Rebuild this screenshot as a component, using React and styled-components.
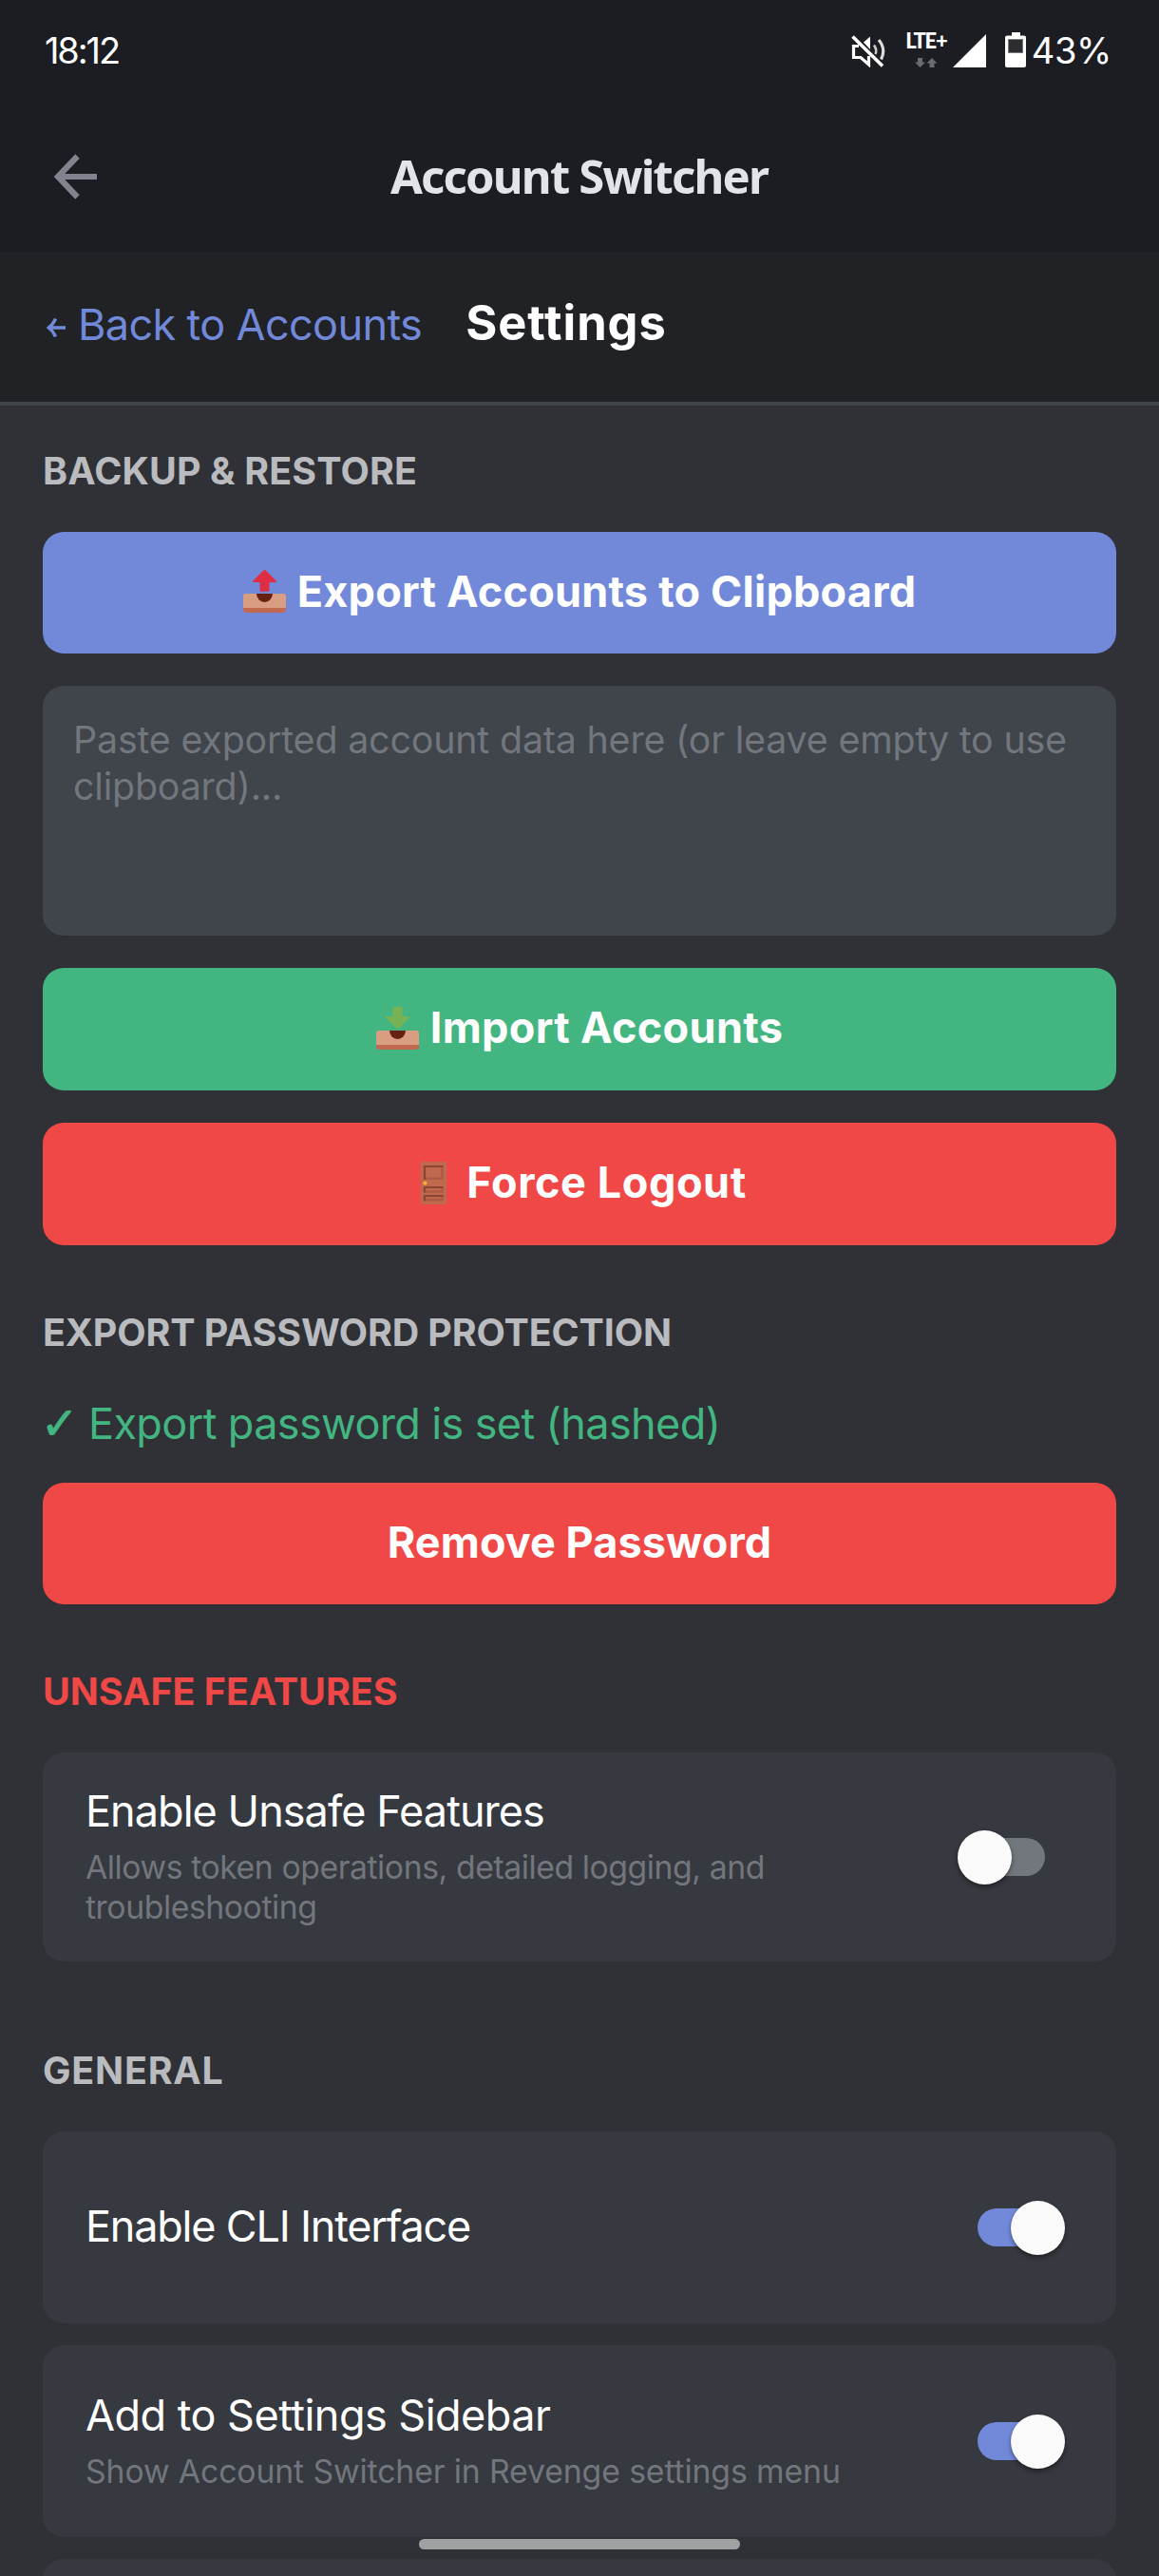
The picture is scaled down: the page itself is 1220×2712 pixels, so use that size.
import React from "react";
import styled, { createGlobalStyle } from "styled-components";

const colors = {
  header: "#1c1d22",
  bar: "#202225",
  page: "#2f3136",
  card: "#36393f",
  input: "#40444b",
  muted: "#72767d",
  label: "#b9bbbe",
  blurple: "#7289da",
  green: "#43b581",
  red: "#f04747",
};

const GlobalStyle = createGlobalStyle`
  * { box-sizing: border-box; }
  body {
    margin: 0;
    background: ${colors.page};
    font-family: Inter, "Open Sans", sans-serif;
    -webkit-font-smoothing: antialiased;
  }
`;

const Screen = styled.div`
  width: 1220px;
  height: 2712px;
  overflow: hidden;
  display: flex;
  flex-direction: column;
  background: ${colors.page};
`;

const StatusBar = styled.div`
  flex: none;
  height: 106px;
  padding: 30px 50px 0 47px;
  display: flex;
  justify-content: space-between;
  background: ${colors.header};
  color: #fff;
`;

const StatusText = styled.span`
  font-size: 38px;
  line-height: 46px;
  letter-spacing: ${(p) => p.$spacing}px;
`;

const StatusIcons = styled.div`
  display: flex;
  align-items: flex-start;
`;

const StatusIcon = styled.svg`
  display: block;
  flex: none;
  margin: ${(p) => p.$margin};
`;

const Network = styled.div`
  width: 42px;
  margin: 2px 7px 0 22px;
  display: flex;
  flex-direction: column;
  align-items: center;
`;

const NetworkLabel = styled.span`
  font-family: Lato, sans-serif;
  font-size: 22px;
  line-height: 22px;
  font-weight: 900;
  letter-spacing: -1.2px;
  white-space: nowrap;
`;

const AppBar = styled.header`
  flex: none;
  height: 159px;
  padding: 0 57px 0 56px;
  display: grid;
  grid-template-columns: 48px 1fr 48px;
  align-items: center;
  background: ${colors.header};
`;

const AppTitle = styled.h1`
  margin: 0 0 1px;
  text-align: center;
  font-family: "Noto Sans", sans-serif;
  font-size: 49px;
  line-height: 60px;
  font-weight: 700;
  letter-spacing: -1.8px;
  color: #e3e4e8;
`;

const SubBar = styled.nav`
  flex: none;
  height: 162px;
  padding: 45px 45px 0 49px;
  display: flex;
  align-items: flex-start;
  background: ${colors.bar};
  border-bottom: 4px solid ${colors.input};
`;

const BackLink = styled.a`
  margin-top: 4px;
  display: flex;
  align-items: center;
  gap: 13px;
  font-size: 45px;
  line-height: 56px;
  letter-spacing: -0.64px;
  color: ${colors.blurple};
  white-space: nowrap;
`;

const SubTitle = styled.h2`
  margin: 0 0 0 46px;
  font-size: 50.6px;
  line-height: 60px;
  font-weight: 700;
  letter-spacing: 0.95px;
  color: #fff;
`;

const Content = styled.main`
  padding: 45px 45px 0;
  display: flex;
  flex-direction: column;
  gap: 68px;
`;

const Section = styled.section`
  display: flex;
  flex-direction: column;
  margin-top: ${(p) => p.$offset ?? 0}px;
`;

const SectionTitle = styled.h3`
  margin: 0 0 40px;
  font-size: 39.4px;
  line-height: 48px;
  font-weight: 700;
  letter-spacing: ${(p) => p.$spacing ?? 0}px;
  color: ${(p) => (p.$danger ? colors.red : colors.label)};
`;

const Stack = styled.div`
  display: flex;
  flex-direction: column;
  gap: ${(p) => p.$gap}px;
`;

const Button = styled.button`
  height: ${(p) => p.$height ?? 129}px;
  padding: 0 0 3px;
  border: 0;
  border-radius: 22px;
  display: flex;
  align-items: center;
  justify-content: center;
  gap: 12px;
  background: ${(p) => colors[p.$tone]};
  color: #fff;
  font: 700 45px/56px Inter, "Open Sans", sans-serif;
  letter-spacing: ${(p) => p.$spacing ?? 0}px;
  svg { flex: none; }
`;

const PasteBox = styled.div`
  height: 263px;
  padding: 33px 31px 33px 32px;
  border-radius: 22px;
  background: ${colors.input};
  color: ${colors.muted};
  font-size: 39.4px;
  line-height: 49px;
  letter-spacing: -0.19px;
`;

const PasswordStatus = styled.p`
  margin: 4px 0 35px;
  display: flex;
  align-items: baseline;
  font-size: 45px;
  line-height: 55px;
  letter-spacing: -0.63px;
  color: ${colors.green};
`;

const Check = styled.span`
  width: 48px;
  font-family: "DejaVu Sans", sans-serif;
  font-size: 47px;
  font-weight: 700;
  margin-left: -2px;
  margin-right: 2px;
  -webkit-text-stroke: 1px ${colors.green};
`;

const Card = styled.div`
  height: ${(p) => p.$height ?? 202}px;
  padding: 0 54px 0 45px;
  border-radius: 22px;
  display: flex;
  align-items: center;
  gap: 45px;
  background: ${colors.card};
`;

const CardText = styled.div`
  flex: 1;
  padding-bottom: 3px;
  display: flex;
  flex-direction: column;
  gap: 11px;
`;

const CardTitle = styled.div`
  font-size: 45px;
  line-height: 55px;
  letter-spacing: ${(p) => p.$spacing}px;
  color: #fff;
`;

const CardNote = styled.div`
  font-size: 33.75px;
  line-height: 42px;
  letter-spacing: ${(p) => p.$spacing}px;
  color: ${colors.muted};
`;

const Track = styled.div`
  flex: none;
  width: 113px;
  height: 57px;
  display: flex;
  justify-content: ${(p) => (p.$on ? "flex-end" : "flex-start")};
  position: relative;
  &::before {
    content: "";
    position: absolute;
    left: 21px;
    top: 8px;
    width: 71px;
    height: 40px;
    border-radius: 20px;
    background: ${(p) => (p.$on ? colors.blurple : colors.muted)};
  }
`;

const Thumb = styled.div`
  position: relative;
  width: 57px;
  height: 57px;
  border-radius: 50%;
  background: #fafafa;
  box-shadow: 0 3px 5px rgba(0, 0, 0, 0.38), 0 0 2px rgba(0, 0, 0, 0.2);
`;

const HomeIndicator = styled.div`
  position: fixed;
  left: 441px;
  top: 2673px;
  width: 338px;
  height: 11px;
  border-radius: 6px;
  background: #a0a1a3;
`;

const MuteIcon = () => (
  <StatusIcon $margin="7px 0 0" width="36" height="34" viewBox="0 0 36 34" fill="none" stroke="#fff" strokeWidth="3.2">
    <path d="M8 11.5H2.500v12H10l8.500 7.500V22" />
    <path d="M13 7.500l7-6V15z" fill="#fff" stroke="none" />
    <path d="M24 10.500q3.500 5 1.500 9.500" stroke="#c9c9cb" strokeWidth="2.600" />
    <path d="M29 5Q37 14.500 31.500 25.500" stroke="#dcdcdd" />
    <path d="M1.500 1.500l31.500 31" strokeWidth="3.600" />
  </StatusIcon>
);

const DataArrows = () => (
  <StatusIcon $margin="7px 0 0" width="24" height="11" viewBox="0 0 24 11" fill="#6b6c70">
    <path d="M3 0h5v4.500h3L5.500 10 0 4.500h3z" />
    <path d="M15.500 10h5V5.500h3L18 0l-5.500 5.500h3z" />
  </StatusIcon>
);

const SignalIcon = () => (
  <StatusIcon $margin="6px 20px 0 0" width="35" height="35" viewBox="0 0 35 35" fill="#fff">
    <path d="M35 0v35H0z" />
  </StatusIcon>
);

const BatteryIcon = () => (
  <StatusIcon $margin="4px 6px 0 0" width="22" height="37" viewBox="0 0 22 37">
    <path fill="#fff" d="M7 0h9v3.500h4a2 2 0 0 1 2 2V35a2 2 0 0 1-2 2H2a2 2 0 0 1-2-2V5.500a2 2 0 0 1 2-2h5z" />
    <rect x="3.500" y="7.500" width="15" height="14" fill="#2c2d31" stroke="#77777b" strokeWidth="1" />
  </StatusIcon>
);

const ArrowLeft = () => (
  <svg width="46" height="48" viewBox="0 0 46 48" fill="none" stroke="#81838f" strokeWidth="6.200">
    <path d="M46 24H5M25.500 2.500L5 24l20.500 21.500" />
  </svg>
);

const LinkArrow = styled.svg`
  flex: none;
  margin-top: 6px;
`;

const SmallArrow = () => (
  <LinkArrow width="20" height="20" viewBox="0 0 20 20" fill="none" stroke={colors.blurple} strokeWidth="3.400">
    <path d="M20 10H3M9.500 0.500Q7 6.500 2.200 10Q7 13.500 9.500 19.500" />
  </LinkArrow>
);

const Tray = ({ children }) => (
  <svg width="45" height="45" viewBox="0 0 36 36">
    <path fill="#C1694F" d="M0 30h36v3a3 3 0 0 1-3 3H3a3 3 0 0 1-3-3z" />
    <path fill="#D99E82" d="M2 20h32a2 2 0 0 1 2 2v10H0V22a2 2 0 0 1 2-2z" />
    <path fill="#662113" d="M11.200 20a6.800 7.200 0 0 0 13.600 0z" />
    {children}
  </svg>
);

const OutboxIcon = () => (
  <Tray>
    <path fill="#DD2E44" d="M18.900.4l8.700 8.600c.9.900.3 1.300-.6 1.300h-5v6.700a1.200 1.200 0 0 1-1.200 1.200h-5.600a1.200 1.200 0 0 1-1.200-1.200v-6.700H9c-.9 0-1.500-.4-.6-1.300L17.100.4a1.300 1.300 0 0 1 1.800 0z" />
  </Tray>
);

const InboxIcon = () => (
  <Tray>
    <path fill="#77B255" d="M18.900 18.100l8.700-8.800c.9-.9.300-1.300-.6-1.300h-5V1.200A1.200 1.200 0 0 0 20.800 0h-5.600A1.200 1.200 0 0 0 14 1.200V8H9c-.9 0-1.500.4-.6 1.300l8.700 8.800a1.300 1.300 0 0 0 1.800 0z" />
  </Tray>
);

const Panel = ({ y, height }) => (
  <>
    <rect x="9.500" y={y} width="16.500" height={height} fill="#AE5943" />
    <path d={`M9.500 ${y}H26v1.600H11.300v${height - 1.6}H9.500z`} fill="#8A4633" />
    <rect x="11.400" y={y + 1.7} width="12.800" height={height - 3.7} fill="#C1694F" />
  </>
);

const DoorIcon = () => (
  <svg width="45" height="45" viewBox="0 0 36 36">
    <rect x="7" y="0" width="22" height="36" rx="1" fill="#C1694F" />
    <Panel y={3.2} height={12} />
    <Panel y={20.8} height={5.4} />
    <Panel y={27.9} height={5.2} />
    <circle cx="10.700" cy="18" r="1.700" fill="#FFAC33" />
  </svg>
);

const Switch = ({ on }) => (
  <Track $on={on} role="switch" aria-checked={!!on}>
    <Thumb />
  </Track>
);

const SettingRow = ({ title, note, on, height, titleSpacing, noteSpacing }) => (
  <Card $height={height}>
    <CardText>
      <CardTitle $spacing={titleSpacing}>{title}</CardTitle>
      {note && <CardNote $spacing={noteSpacing}>{note}</CardNote>}
    </CardText>
    <Switch on={on} />
  </Card>
);

export default function App() {
  return (
    <Screen>
      <GlobalStyle />
      <StatusBar>
        <StatusText $spacing={-2.1}>18:12</StatusText>
        <StatusIcons>
          <MuteIcon />
          <Network>
            <NetworkLabel>LTE+</NetworkLabel>
            <DataArrows />
          </Network>
          <SignalIcon />
          <BatteryIcon />
          <StatusText $spacing={-0.4}>43%</StatusText>
        </StatusIcons>
      </StatusBar>
      <AppBar>
        <ArrowLeft />
        <AppTitle>Account Switcher</AppTitle>
      </AppBar>
      <SubBar>
        <BackLink>
          <SmallArrow />
          Back to Accounts
        </BackLink>
        <SubTitle>Settings</SubTitle>
      </SubBar>
      <Content>
        <Section>
          <SectionTitle $spacing={0.16}>BACKUP &amp; RESTORE</SectionTitle>
          <Stack $gap={34}>
            <Button $tone="blurple" $height={128} $spacing={0.22}>
              <OutboxIcon />
              Export Accounts to Clipboard
            </Button>
            <PasteBox>Paste exported account data here (or leave empty to use clipboard)...</PasteBox>
            <Button $tone="green" $spacing={0.34}>
              <InboxIcon />
              Import Accounts
            </Button>
            <Button $tone="red" $spacing={0.59}>
              <DoorIcon />
              Force Logout
            </Button>
          </Stack>
        </Section>
        <Section>
          <SectionTitle $spacing={-0.1}>EXPORT PASSWORD PROTECTION</SectionTitle>
          <PasswordStatus>
            <Check>✓</Check>
            Export password is set (hashed)
          </PasswordStatus>
          <Button $tone="red" $height={128} $spacing={0.08}>
            Remove Password
          </Button>
        </Section>
        <Section>
          <SectionTitle $danger $spacing={0}>UNSAFE FEATURES</SectionTitle>
          <SettingRow
            title="Enable Unsafe Features"
            note="Allows token operations, detailed logging, and troubleshooting"
            height={220}
            titleSpacing={-0.95}
            noteSpacing={-0.43}
          />
        </Section>
        <Section $offset={23}>
          <SectionTitle $spacing={0.8}>GENERAL</SectionTitle>
          <Stack $gap={23}>
            <SettingRow title="Enable CLI Interface" on titleSpacing={-1.21} />
            <SettingRow
              title="Add to Settings Sidebar"
              note="Show Account Switcher in Revenge settings menu"
              on
              titleSpacing={-0.52}
              noteSpacing={-0.11}
            />
            <Card />
          </Stack>
        </Section>
      </Content>
      <HomeIndicator />
    </Screen>
  );
}
